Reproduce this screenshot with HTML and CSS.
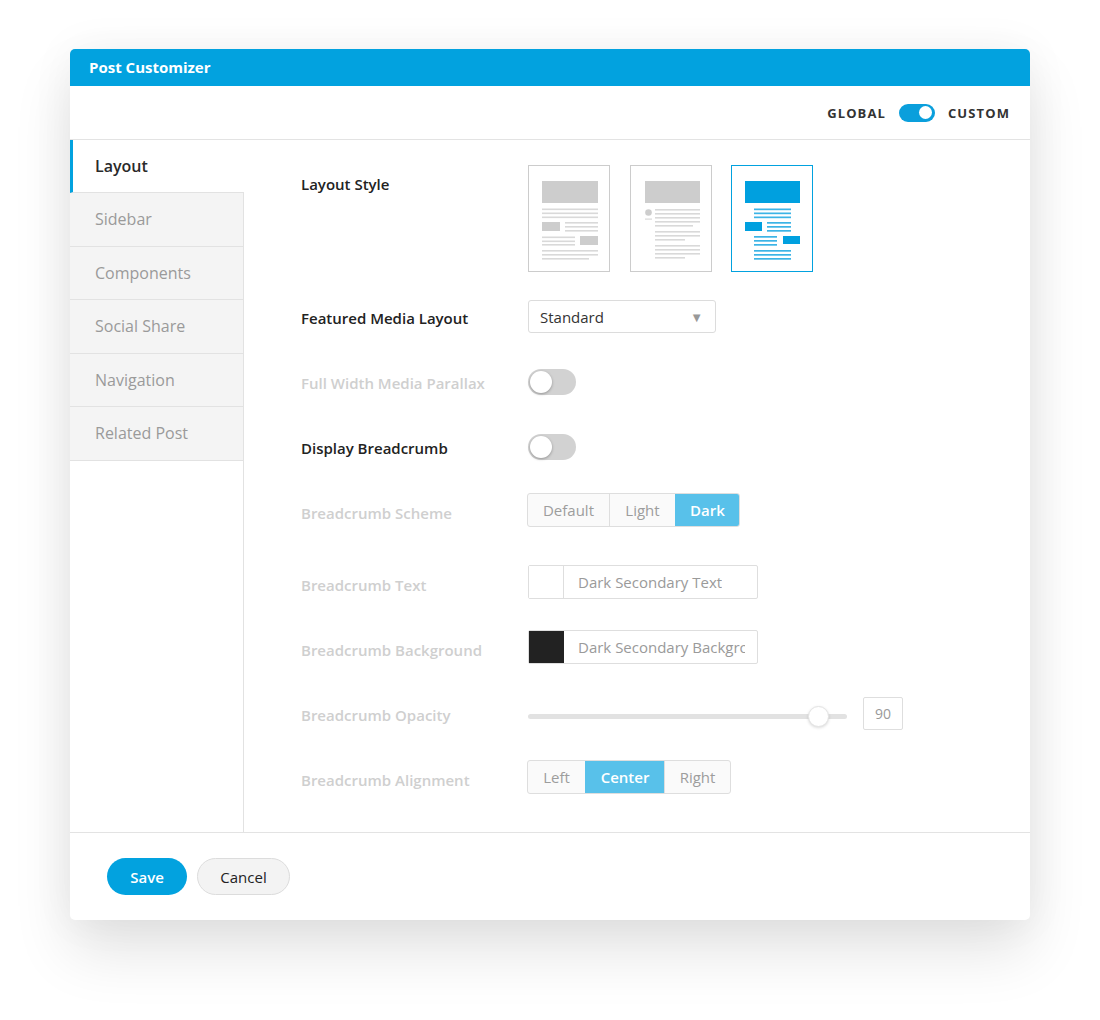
FILE: index.html
```html
<!DOCTYPE html>
<html>
<head>
<meta charset="utf-8">
<title>Post Customizer</title>
<link rel="stylesheet" href="styles.css">
</head>
<body>
<div class="card">
  <div class="card-header">Post Customizer</div>
  <div class="topbar">
    <span class="mode">GLOBAL</span>
    <span class="switch on"><span class="knob"></span></span>
    <span class="mode">CUSTOM</span>
  </div>
  <div class="main">
    <nav class="sidebar">
      <div class="nav-item active">Layout</div>
      <div class="nav-item">Sidebar</div>
      <div class="nav-item">Components</div>
      <div class="nav-item">Social Share</div>
      <div class="nav-item">Navigation</div>
      <div class="nav-item">Related Post</div>
      <div class="nav-fill"></div>
    </nav>
    <section class="content">
      <div class="row row-thumbs">
        <div class="label label-top">Layout Style</div>
        <div class="thumbs">
          <div class="thumb">
            <svg width="81" height="105" viewBox="0 0 81 105">
              <g fill="#cdcdcd"><rect x="13" y="15" width="56" height="22"/><rect x="13" y="56" width="18" height="9"/><rect x="51" y="70" width="18" height="9"/></g>
              <g fill="#d9d9d9">
                <rect x="13" y="42.5" width="56" height="1.6"/><rect x="13" y="46.5" width="56" height="1.6"/><rect x="13" y="50.5" width="56" height="1.6"/>
                <rect x="36" y="56" width="33" height="1.6"/><rect x="36" y="60" width="33" height="1.6"/><rect x="36" y="64" width="33" height="1.6"/>
                <rect x="13" y="70.5" width="33" height="1.6"/><rect x="13" y="74.5" width="33" height="1.6"/><rect x="13" y="78" width="33" height="1.6"/>
                <rect x="13" y="84" width="56" height="1.6"/><rect x="13" y="88" width="56" height="1.6"/><rect x="13" y="92" width="47" height="1.6"/>
              </g>
            </svg>
          </div>
          <div class="thumb">
            <svg width="81" height="105" viewBox="0 0 81 105">
              <g fill="#cdcdcd"><rect x="14" y="15" width="55" height="22"/><circle cx="17.5" cy="46.5" r="3.3"/></g>
              <g fill="#d9d9d9">
                <rect x="14" y="52.5" width="7" height="1.2"/>
                <rect x="24" y="43" width="45" height="1.6"/><rect x="24" y="47" width="45" height="1.6"/><rect x="24" y="51" width="45" height="1.6"/><rect x="24" y="55" width="45" height="1.6"/><rect x="24" y="59" width="38" height="1.6"/>
                <rect x="24" y="65" width="45" height="1.6"/><rect x="24" y="69" width="45" height="1.6"/><rect x="24" y="73" width="30" height="1.6"/>
                <rect x="24" y="79" width="45" height="1.6"/><rect x="24" y="83" width="45" height="1.6"/><rect x="24" y="87" width="45" height="1.6"/><rect x="24" y="91" width="30" height="1.6"/>
              </g>
            </svg>
          </div>
          <div class="thumb selected">
            <svg width="81" height="105" viewBox="0 0 81 105">
              <g fill="#00a0df"><rect x="13" y="15" width="55" height="22"/><rect x="13" y="56" width="17" height="9"/><rect x="51" y="70" width="17" height="8"/></g>
              <g fill="#3cb4e6">
                <rect x="22" y="42.5" width="37" height="1.7"/><rect x="22" y="46.5" width="37" height="1.7"/><rect x="22" y="50.5" width="37" height="1.7"/>
                <rect x="35" y="56" width="24" height="1.7"/><rect x="35" y="60" width="24" height="1.7"/><rect x="35" y="64" width="24" height="1.7"/>
                <rect x="22" y="70" width="23" height="1.7"/><rect x="22" y="74" width="23" height="1.7"/><rect x="22" y="78" width="23" height="1.7"/>
                <rect x="22" y="84" width="37" height="1.7"/><rect x="22" y="88" width="37" height="1.7"/><rect x="22" y="92" width="37" height="1.7"/>
              </g>
            </svg>
          </div>
        </div>
      </div>

      <div class="row row-select">
        <div class="label">Featured Media Layout</div>
        <div class="select"><span>Standard</span><span class="caret">&#9660;</span></div>
      </div>

      <div class="row row-toggle1">
        <div class="label muted">Full Width Media Parallax</div>
        <span class="toggle"><span class="toggle-knob"></span></span>
      </div>

      <div class="row row-toggle2">
        <div class="label">Display Breadcrumb</div>
        <span class="toggle"><span class="toggle-knob"></span></span>
      </div>

      <div class="row row-scheme">
        <div class="label muted label-low">Breadcrumb Scheme</div>
        <div class="segment">
          <span class="seg seg-default">Default</span><span class="seg seg-light">Light</span><span class="seg seg-dark is-on">Dark</span>
        </div>
      </div>

      <div class="row row-text">
        <div class="label muted label-low">Breadcrumb Text</div>
        <div class="color-input">
          <span class="swatch"></span>
          <span class="color-name"><span class="color-clip">Dark Secondary Text</span></span>
        </div>
      </div>

      <div class="row row-bg">
        <div class="label muted label-low">Breadcrumb Background</div>
        <div class="color-input">
          <span class="swatch swatch-dark"></span>
          <span class="color-name"><span class="color-clip">Dark Secondary Background</span></span>
        </div>
      </div>

      <div class="row row-opacity">
        <div class="label muted">Breadcrumb Opacity</div>
        <div class="slider">
          <div class="track"><span class="thumb-knob"></span></div>
        </div>
        <div class="num">90</div>
      </div>

      <div class="row row-align">
        <div class="label muted label-low">Breadcrumb Alignment</div>
        <div class="segment">
          <span class="seg seg-left">Left</span><span class="seg seg-center is-on">Center</span><span class="seg seg-right">Right</span>
        </div>
      </div>
    </section>
  </div>
  <div class="footer">
    <button class="btn btn-save">Save</button>
    <button class="btn btn-cancel">Cancel</button>
  </div>
</div>
</body>
</html>
```

FILE: styles.css
```css
* { box-sizing: border-box; }

html, body {
  margin: 0;
  background: #ffffff;
}

body {
  padding: 49px 70px 101px 70px;
  font-family: "Open Sans", "Noto Sans", "Liberation Sans", sans-serif;
  color: #222;
}

.card {
  width: 960px;
  background: #fff;
  border-radius: 5px;
  box-shadow: 0 32px 60px rgba(0, 0, 0, 0.11), 0 0 45px rgba(0, 0, 0, 0.05);
  overflow: hidden;
}

.card-header {
  height: 37px;
  background: #02a2df;
  color: #fff;
  font-size: 15px;
  font-weight: 700;
  line-height: 37px;
  padding-left: 19px;
}

.topbar {
  height: 54px;
  border-bottom: 1px solid #e3e3e3;
  display: flex;
  align-items: center;
  justify-content: flex-end;
  padding-right: 20px;
  gap: 13px;
}

.mode {
  font-size: 13px;
  font-weight: 700;
  letter-spacing: 1.1px;
  color: #333;
}

.switch {
  width: 36px;
  height: 18px;
  border-radius: 9px;
  background: #0a9fdc;
  position: relative;
  display: inline-block;
}

.switch .knob {
  position: absolute;
  right: 3px;
  top: 2.5px;
  width: 13px;
  height: 13px;
  border-radius: 50%;
  background: #fff;
}

.main {
  display: flex;
  height: 693px;
  border-bottom: 1px solid #e3e3e3;
}

.sidebar {
  width: 174px;
  display: flex;
  flex-direction: column;
}

.nav-item {
  height: 53.5px;
  display: flex;
  align-items: center;
  padding-left: 25px;
  font-size: 16px;
  color: #9a9a9a;
  background: #f4f4f4;
  border-bottom: 1px solid #e2e2e2;
  border-right: 1px solid #e2e2e2;
}

.nav-item.active {
  height: 53px;
  background: #fff;
  color: #2a2a2a;
  font-weight: 600;
  border-left: 3px solid #02a2df;
  border-bottom: 1px solid #e2e2e2;
  border-right: none;
  padding-left: 22px;
}

.nav-fill {
  flex: 1;
  border-right: 1px solid #e2e2e2;
}

.content {
  flex: 1;
  padding: 25px 0 0 57px;
}

.row {
  display: flex;
  align-items: center;
  margin-top: 33px;
}

.label {
  width: 227px;
  flex: none;
  font-size: 15px;
  font-weight: 600;
  color: #222;
  padding-top: 2px;
}

.label.muted { color: #cfcfcf; }

.label.label-low { padding-top: 6px; }

.label-top {
  align-self: flex-start;
  padding-top: 9px;
}

.row-thumbs { margin-top: 0; align-items: flex-start; }
.row-select { margin-top: 28px; }
.row-toggle1 { margin-top: 36px; }
.row-toggle2 { margin-top: 39px; }
.row-scheme { margin-top: 33px; }
.row-text { margin-top: 38px; }
.row-bg { margin-top: 31px; }
.row-opacity { margin-top: 33px; }
.row-align { margin-top: 30px; }

.thumbs {
  display: flex;
  gap: 19.5px;
}

.thumb {
  width: 82px;
  height: 107px;
  border: 1px solid #cccccc;
  background: #fff;
}

.thumb svg { display: block; }

.thumb.selected { border-color: #02a2df; }

.select {
  width: 188px;
  height: 33px;
  border: 1px solid #dcdcdc;
  border-radius: 3px;
  display: flex;
  align-items: center;
  justify-content: space-between;
  padding: 0 12px 0 11px;
  font-size: 15px;
  color: #333;
}

.caret {
  font-size: 13px;
  color: #999;
}

.toggle {
  width: 48px;
  height: 26px;
  border-radius: 13px;
  background: #d2d2d2;
  position: relative;
  display: inline-block;
}

.toggle-knob {
  position: absolute;
  left: 2px;
  top: 2px;
  width: 22px;
  height: 22px;
  border-radius: 50%;
  background: #fff;
  box-shadow: 0 1px 3px rgba(0, 0, 0, 0.3);
}

.segment {
  display: flex;
  height: 34px;
  border: 1px solid #dedede;
  border-radius: 3px;
  overflow: hidden;
  margin-left: -1px;
  background: #fafafa;
}

.seg {
  display: flex;
  align-items: center;
  justify-content: center;
  font-size: 15px;
  color: #9d9d9d;
  border-left: 1px solid #dedede;
}

.seg:first-child { border-left: none; }

.seg.is-on {
  background: #58c1ea;
  color: #fff;
  font-weight: 600;
  border-left-color: #58c1ea;
}

.seg-default { width: 81px; }
.seg-light { width: 66px; }
.seg-dark { width: 64px; }
.seg-left { width: 57px; }
.seg-center { width: 79px; }
.seg-right { width: 66px; }

.color-input {
  width: 230px;
  height: 34px;
  border: 1px solid #dedede;
  border-radius: 2px;
  display: flex;
}

.swatch {
  width: 35px;
  flex: none;
  border-right: 1px solid #dedede;
  background: #fff;
}

.swatch-dark {
  background: #222;
  border-right-color: #222;
}

.color-name {
  flex: 1;
  display: flex;
  align-items: center;
  padding: 0 12px 0 14px;
  min-width: 0;
}

.color-clip {
  display: block;
  overflow: hidden;
  white-space: nowrap;
  font-size: 15px;
  color: #9a9a9a;
}

.slider {
  width: 319px;
  height: 33px;
  display: flex;
  align-items: center;
  padding-top: 5px;
}

.track {
  width: 100%;
  height: 5px;
  border-radius: 3px;
  background: #e2e2e2;
  position: relative;
}

.thumb-knob {
  position: absolute;
  left: 280px;
  top: -8px;
  width: 21px;
  height: 21px;
  border-radius: 50%;
  background: #fff;
  border: 1px solid #e4e4e4;
  box-shadow: 0 1px 3px rgba(0, 0, 0, 0.15);
}

.num {
  margin-left: 16px;
  width: 40px;
  height: 33px;
  border: 1px solid #dedede;
  border-radius: 2px;
  display: flex;
  align-items: center;
  justify-content: center;
  font-size: 14px;
  color: #999;
}

.footer {
  height: 87px;
  display: flex;
  align-items: center;
  padding-left: 37px;
  gap: 10px;
}

.btn {
  height: 37px;
  border-radius: 19px;
  font-family: "Open Sans", "Noto Sans", "Liberation Sans", sans-serif;
  font-size: 15px;
  cursor: pointer;
}

.btn-save {
  width: 80px;
  background: #02a2df;
  color: #fff;
  border: none;
  font-weight: 600;
}

.btn-cancel {
  width: 93px;
  background: #f3f3f3;
  color: #222;
  border: 1px solid #dcdcdc;
}
```
